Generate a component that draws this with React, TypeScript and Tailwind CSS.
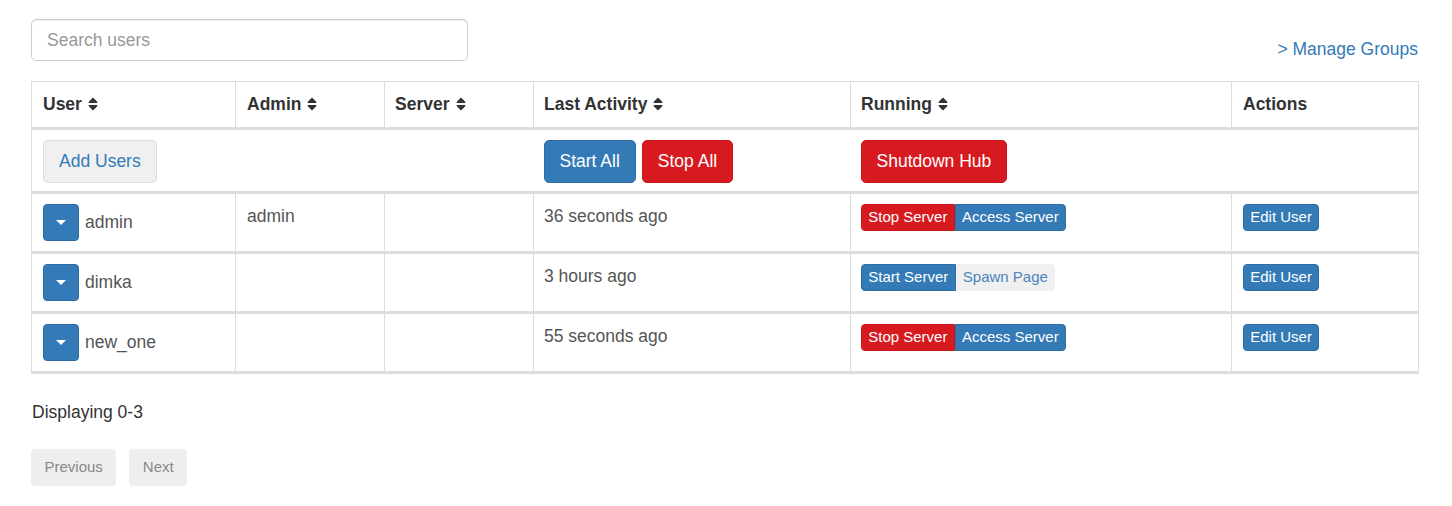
import React from "react";

const SortIcon = () => (
  <svg
    viewBox="0 0 320 512"
    className="ml-[6px] inline-block h-[16px] w-[10px] fill-[#333] align-[-2px]"
  >
    <path d="M41 288h238c21.4 0 32.1 25.9 17 41L177 448c-9.4 9.4-24.6 9.4-33.9 0L24 329c-15.1-15.1-4.4-41 17-41zm255-105L177 64c-9.4-9.4-24.6-9.4-33.9 0L24 183c-15.1 15.1-4.4 41 17 41h238c21.4 0 32.1-25.9 17-41z" />
  </svg>
);

const users = [
  { name: "admin", admin: true, activity: "36 seconds ago", running: true },
  { name: "dimka", admin: false, activity: "3 hours ago", running: false },
  { name: "new_one", admin: false, activity: "55 seconds ago", running: true },
];

const headers = [
  { label: "User", pad: "pl-[11px]" },
  { label: "Admin", pad: "pl-[11px]" },
  { label: "Server", pad: "pl-[10px]" },
  { label: "Last Activity", pad: "pl-[10px]" },
  { label: "Running", pad: "pl-[10px]" },
  { label: "Actions", pad: "pl-[11px]" },
];

const btnXs =
  "h-[27.5px] px-[6.25px] border-[1.25px] text-[15px] leading-[22.5px] whitespace-nowrap";

const cell = "border-x border-t-[3px] border-[#ddd] py-[10px] pr-[10px] align-top";

const App = () => {
  return (
    <div
      className="min-h-[506px] w-[1452px] bg-white px-[31px] pt-[19px] text-[17.5px] leading-[25px] text-[#333]"
      style={{ fontFamily: '"Liberation Sans", Arial, sans-serif' }}
    >
      <div className="flex w-[1387px] items-end justify-between">
        <input
          className="h-[42px] w-[437px] rounded-[5px] border border-[#ccc] px-[15px] text-[17.5px] text-[#555] shadow-[inset_0_1px_1px_rgba(0,0,0,0.075)] outline-none placeholder:text-[#999]"
          placeholder="Search users"
        />
        <a className="mb-[-1px] text-[#337ab7]" href="#">
          &gt; Manage Groups
        </a>
      </div>

      <table className="mt-[20px] w-[1387px] table-fixed border-collapse border border-[#ddd]">
        <colgroup>
          <col className="w-[204px]" />
          <col className="w-[149px]" />
          <col className="w-[149px]" />
          <col className="w-[317px]" />
          <col className="w-[381px]" />
          <col className="w-[187px]" />
        </colgroup>
        <thead>
          <tr>
            {headers.map((h) => (
              <th
                key={h.label}
                className={`border-x border-b-[3px] border-[#ddd] py-[10px] pr-[10px] ${h.pad} text-left align-bottom font-bold text-[#333]`}
              >
                {h.label}
                {h.label !== "Actions" && <SortIcon />}
              </th>
            ))}
          </tr>
        </thead>
        <tbody>
          <tr>
            <td colSpan={3} className="pb-[8px] pl-[11px] pr-[10px] pt-[10px] align-top">
              <button className="h-[42.5px] rounded-[5px] border-[1.25px] border-[#ddd] bg-[#f0f0f0] px-[15px] text-[#337ab7]">
                Add Users
              </button>
            </td>
            <td className="px-[10px] pb-[8px] pt-[10px] align-top">
              <div className="flex gap-[6px]">
                <button className="h-[42.5px] rounded-[5px] border-[1.25px] border-[#2e6da4] bg-[#337ab7] px-[15px] text-white">
                  Start All
                </button>
                <button className="h-[42.5px] rounded-[5px] border-[1.25px] border-[#c9171c] bg-[#d71a20] px-[15px] text-white">
                  Stop All
                </button>
              </div>
            </td>
            <td colSpan={2} className="px-[10px] pb-[8px] pt-[10px] align-top">
              <button className="h-[42.5px] rounded-[5px] border-[1.25px] border-[#c9171c] bg-[#d71a20] px-[15px] text-white">
                Shutdown Hub
              </button>
            </td>
          </tr>
        </tbody>
        {users.map((u, i) => {
          const last = i === users.length - 1 ? "border-b-[3px]" : "";
          return (
            <tbody key={u.name}>
              <tr className="text-[#555]">
                <td className={`${cell} pl-[11px] ${last}`}>
                  <div className="flex items-center gap-[6px]">
                    <button className="flex h-[37px] w-[36px] items-center justify-center rounded-[4px] border-[1.25px] border-[#2e6da4] bg-[#337ab7]">
                      <span className="h-0 w-0 border-x-[5px] border-t-[5px] border-x-transparent border-t-white" />
                    </button>
                    <span>{u.name}</span>
                  </div>
                </td>
                <td className={`${cell} pl-[11px] ${last}`}>
                  {u.admin ? "admin" : ""}
                </td>
                <td className={`${cell} pl-[10px] ${last}`}></td>
                <td className={`${cell} pl-[10px] ${last}`}>{u.activity}</td>
                <td className={`${cell} pl-[10px] ${last}`}>
                  <div className="flex">
                    {u.running ? (
                      <>
                        <button
                          className={`${btnXs} rounded-l-[4px] border-[#c9171c] bg-[#d71a20] text-white`}
                        >
                          Stop Server
                        </button>
                        <button
                          className={`${btnXs} rounded-r-[4px] border-[#2e6da4] bg-[#337ab7] text-white`}
                        >
                          Access Server
                        </button>
                      </>
                    ) : (
                      <>
                        <button
                          className={`${btnXs} rounded-l-[4px] border-[#2e6da4] bg-[#337ab7] text-white`}
                        >
                          Start Server
                        </button>
                        <button
                          className={`${btnXs} rounded-r-[4px] border-[#f0f0f0] bg-[#f0f0f0] text-[#4a84bd]`}
                        >
                          Spawn Page
                        </button>
                      </>
                    )}
                  </div>
                </td>
                <td className={`${cell} pl-[11px] ${last}`}>
                  <button
                    className={`${btnXs} rounded-[4px] border-[#2e6da4] bg-[#337ab7] text-white`}
                  >
                    Edit User
                  </button>
                </td>
              </tr>
            </tbody>
          );
        })}
      </table>

      <p className="mt-[26px] pl-[1px]">Displaying 0-3</p>

      <div className="mt-[24px] flex gap-[13px]">
        <button className="h-[37.5px] rounded-[4px] border-[1.25px] border-[#eee] bg-[#eee] px-[12.5px] text-[15px] leading-[22.5px] text-[#888]">
          Previous
        </button>
        <button className="h-[37.5px] rounded-[4px] border-[1.25px] border-[#eee] bg-[#eee] px-[12.5px] text-[15px] leading-[22.5px] text-[#888]">
          Next
        </button>
      </div>
    </div>
  );
};

export default App;
